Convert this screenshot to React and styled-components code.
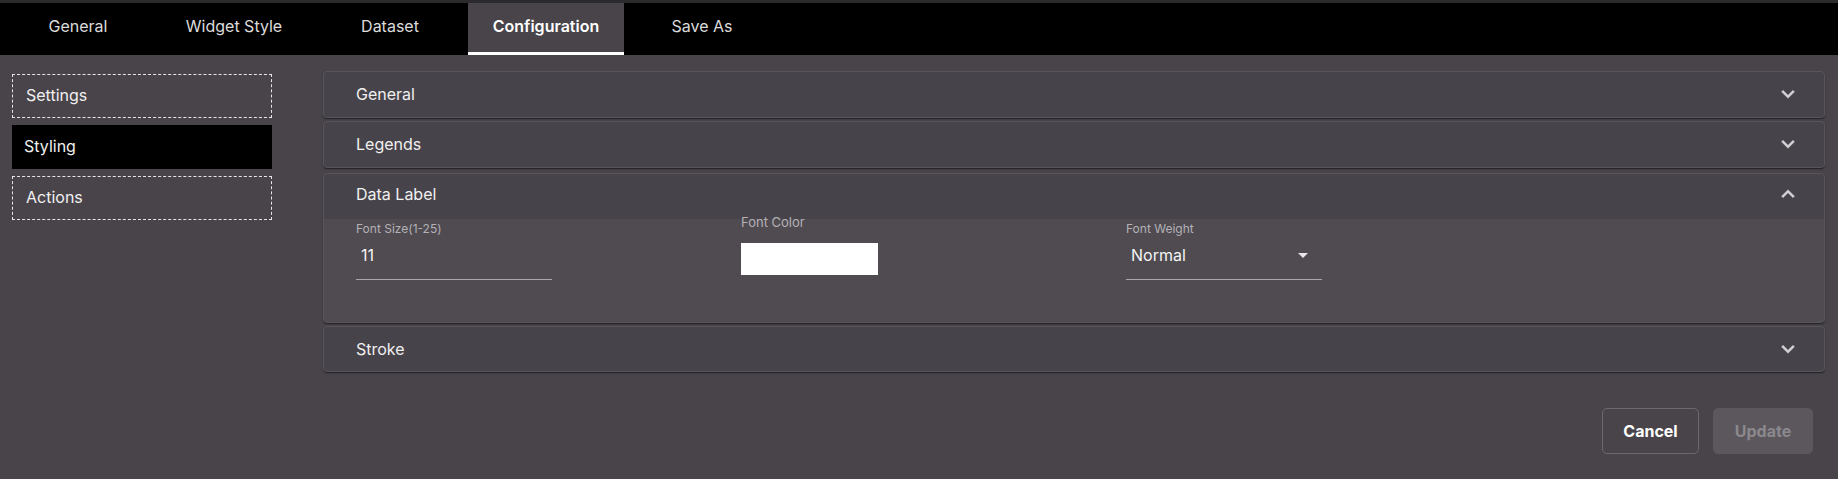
import styled, { createGlobalStyle } from "styled-components";

const GlobalStyle = createGlobalStyle`
  html, body {
    margin: 0;
    padding: 0;
    background-color: #48444a;
  }
  * {
    box-sizing: border-box;
  }
`;

const Root = styled.div`
  width: 100%;
  min-height: 100vh;
  background-color: #48444a;
  font-family: Inter, "Open Sans", sans-serif;
  color: #f2f2f2;
`;

const TabBar = styled.div`
  display: flex;
  height: 55px;
  background-color: #000;
  border-top: 3px solid #2b2a2c;
`;

const Tab = styled.div`
  width: 156px;
  height: 52px;
  display: flex;
  align-items: center;
  justify-content: center;
  padding-bottom: 3px;
  font-size: 16px;
  font-weight: ${(p) => (p.$active ? 600 : 400)};
  color: ${(p) => (p.$active ? "#ffffff" : "#dcdcdc")};
  background-color: ${(p) => (p.$active ? "#48444a" : "transparent")};
  border-bottom: 3px solid ${(p) => (p.$active ? "#ffffff" : "transparent")};
  cursor: pointer;
`;

const Body = styled.div`
  display: flex;
  align-items: flex-start;
`;

const Sidebar = styled.div`
  width: 323px;
  flex-shrink: 0;
  padding: 19px 0 0 12px;
  display: flex;
  flex-direction: column;
  gap: 7px;
`;

const SideItem = styled.div`
  width: 260px;
  height: 44px;
  display: flex;
  align-items: center;
  padding-left: ${(p) => (p.$active ? "12px" : "13px")};
  padding-bottom: 2px;
  font-size: 16px;
  color: #f0f0f0;
  background-color: ${(p) => (p.$active ? "#000" : "transparent")};
  border: ${(p) => (p.$active ? "none" : "1px dashed #e6e6e6")};
  cursor: pointer;
`;

const Main = styled.div`
  flex: 1;
  padding: 16px 13px 0 0;
`;

const AccordionList = styled.div`
  display: flex;
  flex-direction: column;
  gap: 3px;
`;

const Accordion = styled.div`
  background-color: #47434a;
  border: 1px solid #58545b;
  border-radius: 4px;
  overflow: hidden;
  margin-top: ${(p) => (p.$expanded ? "2px" : "0")};
  box-shadow: 0 2px 1px -1px rgba(0, 0, 0, 0.35), 0 1px 2px rgba(0, 0, 0, 0.25);
`;

const AccordionHeader = styled.div`
  height: ${(p) => p.$h || 45}px;
  display: flex;
  align-items: center;
  justify-content: space-between;
  padding: 0 23px ${(p) => (p.$expanded ? "6px" : "1px")} 32px;
  font-size: 16px;
  color: #f0f0f0;
  cursor: pointer;
`;

const Chevron = styled.svg`
  width: 26px;
  height: 26px;
  fill: #d4d2d6;
  stroke: #d4d2d6;
  stroke-width: 0.4;
`;

const AccordionContent = styled.div`
  height: 103px;
  background-color: #4f4b51;
  padding: 2px 0 0 32px;
  display: grid;
  grid-template-columns: 385px 385px 196px;
  align-items: start;
`;

const Field = styled.div`
  width: 196px;
  display: flex;
  flex-direction: column;
`;

const FieldLabel = styled.div`
  font-size: ${(p) => p.$size || 12}px;
  line-height: 16px;
  color: #b4b1b6;
  margin-top: ${(p) => p.$offset || 0}px;
  white-space: nowrap;
`;

const InputRow = styled.div`
  height: 43px;
  display: flex;
  align-items: center;
  justify-content: space-between;
  padding: 0 0 7px 5px;
  border-bottom: 1px solid #a9a6ab;
  font-size: 16px;
  color: #f4f4f4;
`;

const DropIcon = styled.svg`
  width: 24px;
  height: 24px;
  margin-right: 7px;
  fill: #e6e6e6;
`;

const Swatch = styled.div`
  width: 137px;
  height: 32px;
  margin-top: 13px;
  background-color: #ffffff;
`;

const Footer = styled.div`
  display: flex;
  justify-content: flex-end;
  gap: 14px;
  margin-top: 36px;
  padding-right: 12px;
`;

const Button = styled.div`
  width: ${(p) => p.$w}px;
  height: 46px;
  display: flex;
  align-items: center;
  justify-content: center;
  border-radius: 5px;
  font-size: 16px;
  font-weight: 700;
  color: ${(p) => (p.$disabled ? "#8b888d" : "#ffffff")};
  background-color: ${(p) => (p.$disabled ? "#5b575d" : "transparent")};
  border: 1px solid ${(p) => (p.$disabled ? "#5b575d" : "#6c686e")};
  cursor: ${(p) => (p.$disabled ? "default" : "pointer")};
`;

const ExpandMore = () => (
  <Chevron viewBox="0 0 24 24">
    <path d="M16.59 8.59 12 13.17 7.41 8.59 6 10l6 6 6-6z" />
  </Chevron>
);

const ExpandLess = () => (
  <Chevron viewBox="0 0 24 24">
    <path d="M12 8l-6 6 1.41 1.41L12 10.83l4.59 4.58L18 14z" />
  </Chevron>
);

const tabs = ["General", "Widget Style", "Dataset", "Configuration", "Save As"];
const sideItems = ["Settings", "Styling", "Actions"];

const App = () => {
  return (
    <Root>
      <GlobalStyle />
      <TabBar>
        {tabs.map((t) => (
          <Tab key={t} $active={t === "Configuration"}>
            {t}
          </Tab>
        ))}
      </TabBar>
      <Body>
        <Sidebar>
          {sideItems.map((s) => (
            <SideItem key={s} $active={s === "Styling"}>
              {s}
            </SideItem>
          ))}
        </Sidebar>
        <Main>
          <AccordionList>
            <Accordion>
              <AccordionHeader>
                General
                <ExpandMore />
              </AccordionHeader>
            </Accordion>
            <Accordion>
              <AccordionHeader>
                Legends
                <ExpandMore />
              </AccordionHeader>
            </Accordion>
            <Accordion $expanded>
              <AccordionHeader $expanded>
                Data Label
                <ExpandLess />
              </AccordionHeader>
              <AccordionContent>
                <Field>
                  <FieldLabel>Font Size(1-25)</FieldLabel>
                  <InputRow>11</InputRow>
                </Field>
                <Field>
                  <FieldLabel $size={13} $offset={-7}>
                    Font Color
                  </FieldLabel>
                  <Swatch />
                </Field>
                <Field>
                  <FieldLabel>Font Weight</FieldLabel>
                  <InputRow>
                    Normal
                    <DropIcon viewBox="0 0 24 24">
                      <path d="M7 10l5 5 5-5z" />
                    </DropIcon>
                  </InputRow>
                </Field>
              </AccordionContent>
            </Accordion>
            <Accordion>
              <AccordionHeader $h={44}>
                Stroke
                <ExpandMore />
              </AccordionHeader>
            </Accordion>
          </AccordionList>
          <Footer>
            <Button $w={97}>Cancel</Button>
            <Button $w={100} $disabled>
              Update
            </Button>
          </Footer>
        </Main>
      </Body>
    </Root>
  );
};

export default App;
